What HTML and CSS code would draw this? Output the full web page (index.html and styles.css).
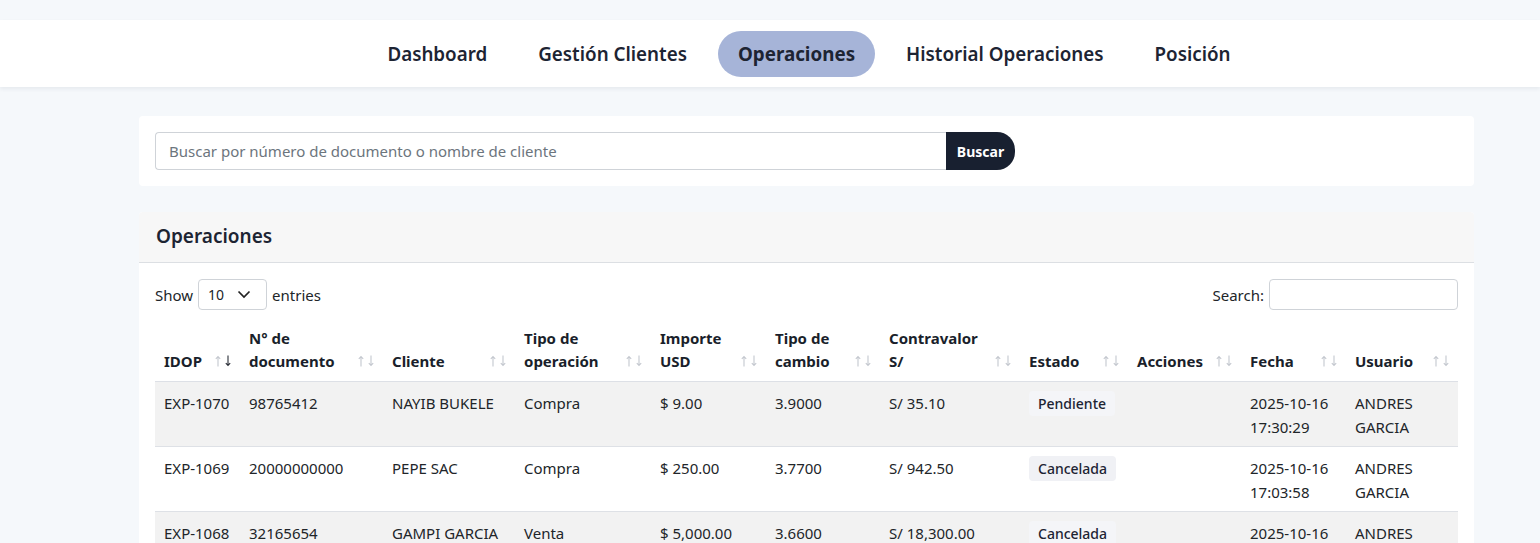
FILE: index.html
```html
<!DOCTYPE html>
<html lang="es">
<head>
<meta charset="utf-8">
<title>Operaciones</title>
<link rel="stylesheet" href="styles.css">
</head>
<body>
<svg class="defs" width="0" height="0" aria-hidden="true">
  <symbol id="arr-up" viewBox="0 0 6 12"><path d="M3 11.5V1.5M0.8 3.8L3 1.5L5.2 3.8" fill="none" stroke="currentColor" stroke-width="1.1"/></symbol>
  <symbol id="arr-dn" viewBox="0 0 6 12"><path d="M3 0.5V10.5M0.8 8.2L3 10.5L5.2 8.2" fill="none" stroke="currentColor" stroke-width="1.1"/></symbol>
</svg>

<nav class="topnav">
  <ul class="nav-list">
    <li><a class="nav-link">Dashboard</a></li>
    <li><a class="nav-link">Gestión Clientes</a></li>
    <li><a class="nav-link active">Operaciones</a></li>
    <li><a class="nav-link">Historial Operaciones</a></li>
    <li><a class="nav-link">Posición</a></li>
  </ul>
</nav>

<main class="page">
  <section class="card search-card">
    <form class="search-group">
      <input class="search-input" type="text" placeholder="Buscar por número de documento o nombre de cliente">
      <button class="search-btn" type="button">Buscar</button>
    </form>
  </section>

  <section class="card ops-card">
    <header class="card-header"><h2>Operaciones</h2></header>
    <div class="card-body">
      <div class="dt-top">
        <label class="dt-length">Show
          <span class="select-box">10
            <svg class="chev" width="14" height="9" viewBox="0 0 14 9"><path d="M1.5 1.5L7 7L12.5 1.5" fill="none" stroke="#222" stroke-width="1.7"/></svg>
          </span>
          entries</label>
        <label class="dt-search">Search: <input class="dt-search-input" type="search"></label>
      </div>

      <table class="ops-table">
        <colgroup>
          <col class="c-id"><col class="c-doc"><col class="c-cli"><col class="c-tipo"><col class="c-imp">
          <col class="c-tc"><col class="c-cv"><col class="c-est"><col class="c-acc"><col class="c-fec"><col class="c-usr">
        </colgroup>
        <thead>
          <tr>
            <th>IDOP<span class="sort"><svg class="a"><use href="#arr-up"/></svg><svg class="a on"><use href="#arr-dn"/></svg></span></th>
            <th>N° de documento<span class="sort"><svg class="a"><use href="#arr-up"/></svg><svg class="a"><use href="#arr-dn"/></svg></span></th>
            <th>Cliente<span class="sort"><svg class="a"><use href="#arr-up"/></svg><svg class="a"><use href="#arr-dn"/></svg></span></th>
            <th>Tipo de operación<span class="sort"><svg class="a"><use href="#arr-up"/></svg><svg class="a"><use href="#arr-dn"/></svg></span></th>
            <th>Importe USD<span class="sort"><svg class="a"><use href="#arr-up"/></svg><svg class="a"><use href="#arr-dn"/></svg></span></th>
            <th>Tipo de cambio<span class="sort"><svg class="a"><use href="#arr-up"/></svg><svg class="a"><use href="#arr-dn"/></svg></span></th>
            <th>Contravalor S/<span class="sort"><svg class="a"><use href="#arr-up"/></svg><svg class="a"><use href="#arr-dn"/></svg></span></th>
            <th>Estado<span class="sort"><svg class="a"><use href="#arr-up"/></svg><svg class="a"><use href="#arr-dn"/></svg></span></th>
            <th>Acciones<span class="sort"><svg class="a"><use href="#arr-up"/></svg><svg class="a"><use href="#arr-dn"/></svg></span></th>
            <th>Fecha<span class="sort"><svg class="a"><use href="#arr-up"/></svg><svg class="a"><use href="#arr-dn"/></svg></span></th>
            <th>Usuario<span class="sort"><svg class="a"><use href="#arr-up"/></svg><svg class="a"><use href="#arr-dn"/></svg></span></th>
          </tr>
        </thead>
        <tbody>
          <tr>
            <td>EXP-1070</td><td>98765412</td><td>NAYIB BUKELE</td><td>Compra</td><td>$ 9.00</td><td>3.9000</td><td>S/ 35.10</td>
            <td><span class="badge">Pendiente</span></td><td></td><td>2025-10-16 17:30:29</td><td>ANDRES GARCIA</td>
          </tr>
          <tr>
            <td>EXP-1069</td><td>20000000000</td><td>PEPE SAC</td><td>Compra</td><td>$ 250.00</td><td>3.7700</td><td>S/ 942.50</td>
            <td><span class="badge">Cancelada</span></td><td></td><td>2025-10-16 17:03:58</td><td>ANDRES GARCIA</td>
          </tr>
          <tr>
            <td>EXP-1068</td><td>32165654</td><td>GAMPI GARCIA</td><td>Venta</td><td>$ 5,000.00</td><td>3.6600</td><td>S/ 18,300.00</td>
            <td><span class="badge">Cancelada</span></td><td></td><td>2025-10-16 16:52:11</td><td>ANDRES GARCIA</td>
          </tr>
        </tbody>
      </table>
    </div>
  </section>
</main>
</body>
</html>
```

FILE: styles.css
```css
* { box-sizing: border-box; }

body {
  margin: 0;
  padding-top: 20px;
  background: #f5f8fb;
  font-family: "Noto Sans", "Open Sans", sans-serif;
  font-size: 15px;
  color: #212529;
}

.defs { position: absolute; width: 0; height: 0; overflow: hidden; }

/* top navigation */
.topnav {
  background: #fff;
  height: 67px;
  display: flex;
  align-items: center;
  justify-content: center;
  padding-left: 78px;
  box-shadow: 0 2px 4px rgba(30, 45, 70, 0.07);
}
.nav-list {
  display: flex;
  gap: 11px;
  list-style: none;
  margin: 0;
  padding: 0;
}
.nav-link {
  display: block;
  height: 46px;
  line-height: 46px;
  padding: 0 20px;
  border-radius: 23px;
  font-size: 18.8px;
  font-weight: 600;
  color: #1d2433;
  cursor: pointer;
}
.nav-link.active {
  background: #a6b4d8;
  font-weight: 700;
}

/* page */
.page {
  padding: 29px 66px 0 139px;
}
.card {
  background: #fff;
  border-radius: 4px;
}

.search-card { padding: 16px; }
.search-group {
  display: flex;
  width: 860px;
  margin: 0;
}
.search-input {
  flex: 1;
  height: 38px;
  border: 1px solid #cfd3d8;
  border-right: 0;
  border-radius: 4px 0 0 4px;
  padding: 0 13px;
  font-family: inherit;
  font-size: 15px;
  color: #212529;
  outline: none;
}
.search-input::placeholder { color: #6c757d; }
.search-btn {
  width: 69px;
  height: 38px;
  border: 0;
  border-radius: 0 18px 18px 0;
  background: #182030;
  color: #fff;
  font-family: inherit;
  font-size: 14px;
  font-weight: 700;
  padding: 0;
}

.ops-card {
  margin-top: 26px;
  overflow: hidden;
}
.card-header {
  height: 51px;
  background: #f7f7f7;
  border-bottom: 1px solid #dcdfe3;
  padding: 0 17px 3px;
  display: flex;
  align-items: center;
}
.card-header h2 {
  margin: 0;
  font-size: 19px;
  font-weight: 600;
  color: #1d2433;
}
.card-body { padding: 16px; }

/* datatable controls */
.dt-top {
  display: flex;
  justify-content: space-between;
  align-items: center;
  height: 31px;
  margin-bottom: 9px;
}
.dt-length, .dt-search {
  display: flex;
  align-items: center;
  gap: 5px;
  font-size: 15px;
}
.select-box {
  display: flex;
  align-items: center;
  justify-content: space-between;
  width: 69px;
  height: 31px;
  padding: 0 15px 0 9px;
  border: 1px solid #cfd3d8;
  border-radius: 4px;
  font-size: 14px;
}
.dt-search-input {
  width: 189px;
  height: 31px;
  border: 1px solid #cfd3d8;
  border-radius: 4px;
  outline: none;
}

/* table */
.ops-table {
  width: 100%;
  border-collapse: collapse;
  table-layout: fixed;
}
.c-id { width: 85px; }
.c-doc { width: 143px; }
.c-cli { width: 132px; }
.c-tipo { width: 136px; }
.c-imp { width: 115px; }
.c-tc { width: 114px; }
.c-cv { width: 140px; }
.c-est { width: 108px; }
.c-acc { width: 113px; }
.c-fec { width: 105px; }
.c-usr { width: 112px; }

.ops-table th {
  position: relative;
  text-align: left;
  vertical-align: bottom;
  padding: 8px 26px 8px 9px;
  line-height: 23px;
  font-size: 15px;
  font-weight: 700;
  color: #1a1f2b;
  border-bottom: 1px solid #dde0e6;
}
.sort {
  position: absolute;
  right: 9px;
  bottom: 14px;
  display: flex;
  gap: 4px;
  color: #c4c8cf;
}
.sort .a { width: 6px; height: 12px; display: block; }
.sort .a.on { color: #2b2f38; }

.ops-table td {
  vertical-align: top;
  padding: 9px 9px 7px;
  line-height: 24px;
  font-size: 15px;
  border-top: 1px solid #dee1e6;
}
.ops-table tbody tr:first-child td { border-top: 0; }
.ops-table tbody tr:nth-child(odd) td { background: #f2f2f2; }

.badge {
  display: inline-block;
  padding: 0 9px;
  line-height: 25px;
  border-radius: 4px;
  background: #eff1f5;
  font-size: 14px;
  font-weight: 500;
  color: #1d2433;
}
.ops-table tbody tr:nth-child(odd) .badge { background: #f4f5f8; }
.ops-table tbody tr:nth-child(even) .badge { background: #f0f1f5; }
```
